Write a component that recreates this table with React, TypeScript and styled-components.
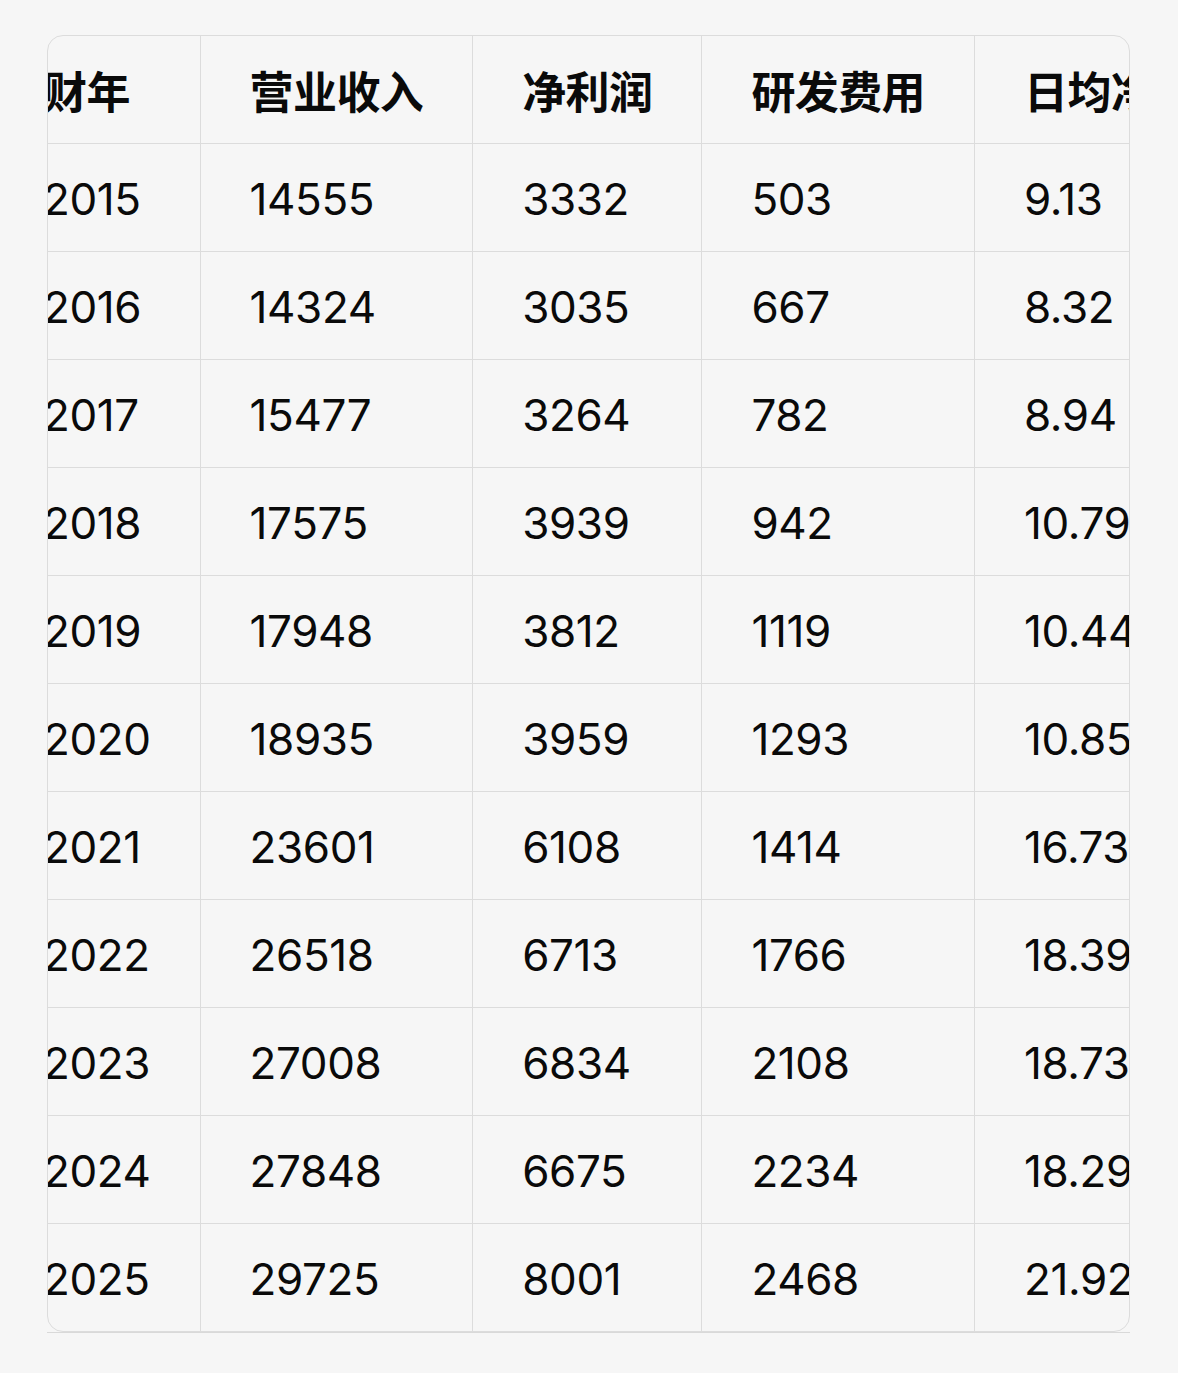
import React, { useLayoutEffect, useRef } from 'react';
import styled, { createGlobalStyle } from 'styled-components';

const GlobalStyle = createGlobalStyle`
  html, body {
    margin: 0;
    padding: 0;
    background: #f6f6f6;
  }
  body {
    font-family: "Inter", "Noto Sans CJK SC", sans-serif;
    color: #0a0a0a;
  }
`;

const Page = styled.div`
  padding: 35px 48px 40px 47px;
`;

// straight rule under the rounded box, like the reference
const Frame = styled.div`
  border-bottom: 1px solid #d9d9d9;
`;

const Scroller = styled.div`
  border: 1px solid #dcdcdc;
  border-radius: 16px;
  overflow-x: auto;
  overflow-y: hidden;
  scrollbar-width: none;
  &::-webkit-scrollbar {
    display: none;
  }
`;

const Table = styled.table`
  border-collapse: collapse;
  white-space: nowrap;
`;

const Cell = styled.td<{ $head?: boolean }>`
  height: ${(p) => (p.$head ? '107px' : '104px')};
  padding: ${(p) => (p.$head ? '0 49px' : '3px 49px 0')};
  text-align: left;
  vertical-align: middle;
  font-family: ${(p) => (p.$head ? '"Noto Sans CJK SC", sans-serif' : '"Inter", "Noto Sans CJK SC", sans-serif')};
  font-size: 44px;
  font-weight: ${(p) => (p.$head ? 600 : 400)};
  letter-spacing: ${(p) => (p.$head ? '-0.6px' : '-0.4px')};
  border-right: 1px solid #dcdcdc;
  border-bottom: 1px solid #dcdcdc;
  tr:last-child > & {
    border-bottom: none;
  }
`;

const headers = ['财年', '营业收入', '净利润', '研发费用', '日均净利润'];

const rows: string[][] = [
  ['2015', '14555', '3332', '503', '9.13'],
  ['2016', '14324', '3035', '667', '8.32'],
  ['2017', '15477', '3264', '782', '8.94'],
  ['2018', '17575', '3939', '942', '10.79'],
  ['2019', '17948', '3812', '1119', '10.44'],
  ['2020', '18935', '3959', '1293', '10.85'],
  ['2021', '23601', '6108', '1414', '16.73'],
  ['2022', '26518', '6713', '1766', '18.39'],
  ['2023', '27008', '6834', '2108', '18.73'],
  ['2024', '27848', '6675', '2234', '18.29'],
  ['2025', '29725', '8001', '2468', '21.92'],
];

const App: React.FC = () => {
  const scrollRef = useRef<HTMLDivElement>(null);

  // the table is shown scrolled a little to the right
  useLayoutEffect(() => {
    if (scrollRef.current) scrollRef.current.scrollLeft = 54;
  }, []);

  return (
    <>
      <GlobalStyle />
      <Page>
        <Frame>
          <Scroller ref={scrollRef}>
            <Table>
              <tbody>
                <tr>
                  {headers.map((h) => (
                    <Cell as="th" $head key={h}>
                      {h}
                    </Cell>
                  ))}
                </tr>
                {rows.map((r) => (
                  <tr key={r[0]}>
                    {r.map((v, i) => (
                      <Cell key={i}>{v}</Cell>
                    ))}
                  </tr>
                ))}
              </tbody>
            </Table>
          </Scroller>
        </Frame>
      </Page>
    </>
  );
};

export default App;
